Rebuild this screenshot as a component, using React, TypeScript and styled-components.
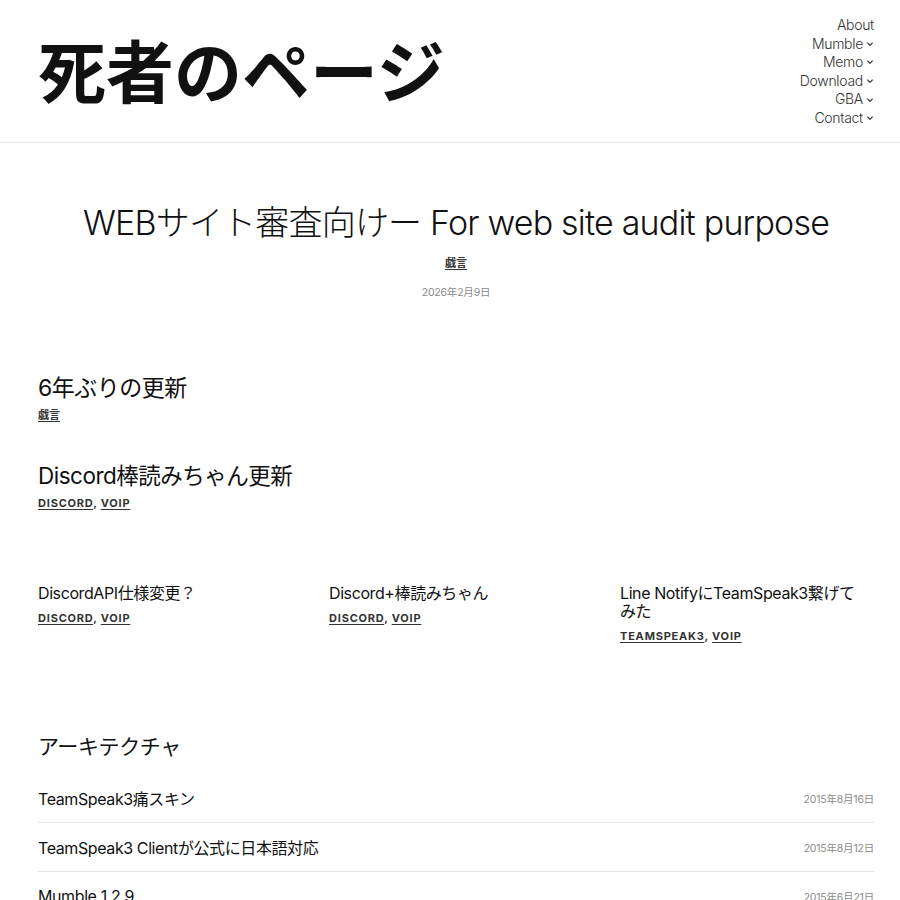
import React from "react";
import styled, { createGlobalStyle } from "styled-components";

const GlobalStyle = createGlobalStyle`
  html, body {
    margin: 0;
    padding: 0;
    background: #ffffff;
  }
  body {
    font-family: "Inter", "Noto Sans CJK JP", sans-serif;
    color: #111111;
  }
  a {
    color: inherit;
  }
`;

const Header = styled.header`
  display: flex;
  justify-content: space-between;
  align-items: flex-start;
  padding: 14px 26px 0 38px;
  height: 128px;
  border-bottom: 1px solid #e6e6e6;
`;

const SiteTitle = styled.h1`
  margin: 14px 0 0;
  font-family: "Noto Sans CJK JP", sans-serif;
  font-weight: 700;
  font-size: 68px;
  line-height: 1.2;
  letter-spacing: 0;
  color: #111111;
`;

const Nav = styled.nav`
  display: flex;
  flex-direction: column;
  align-items: flex-end;
  padding-top: 2px;
`;

const NavItem = styled.a`
  display: flex;
  align-items: center;
  gap: 3px;
  font-size: 14px;
  font-weight: 300;
  line-height: 18.6px;
  color: #333333;
  text-decoration: none;
  letter-spacing: -0.3px;
`;

const Chevron = () => (
  <svg width="8" height="8" viewBox="0 0 24 24" fill="none" stroke="currentColor" strokeWidth="3.2" strokeLinecap="round" strokeLinejoin="round">
    <path d="M5 9l7 7 7-7" />
  </svg>
);

const Main = styled.main`
  padding: 0 26px 0 38px;
`;

const Featured = styled.section`
  display: flex;
  flex-direction: column;
  align-items: center;
  padding-top: 56px;
`;

const FeaturedTitle = styled.h2`
  margin: 0;
  font-weight: 300;
  font-size: 34px;
  line-height: 48px;
  letter-spacing: -0.8px;
  color: #111111;
`;

const Terms = styled.div<{ $caps?: boolean }>`
  font-size: 11px;
  line-height: 16px;
  font-weight: 700;
  letter-spacing: ${(p) => (p.$caps ? "0.8px" : "0")};
  text-transform: ${(p) => (p.$caps ? "uppercase" : "none")};
  color: #333333;
  a {
    text-decoration: underline;
    text-underline-offset: 2px;
  }
`;

const CenterTerms = styled(Terms)`
  margin-top: 8px;
`;

const DateText = styled.time`
  font-size: 10.5px;
  color: #8a8a8a;
  letter-spacing: -0.2px;
`;

const FeaturedDate = styled(DateText)`
  margin-top: 13px;
`;

const Stack = styled.section`
  display: flex;
  flex-direction: column;
  gap: 38px;
  padding-top: 74px;
`;

const Post = styled.article`
  display: flex;
  flex-direction: column;
  gap: 4px;
`;

const PostTitle = styled.h3<{ $size: number }>`
  margin: 0;
  font-weight: 400;
  font-size: ${(p) => p.$size}px;
  line-height: 30px;
  letter-spacing: -0.5px;
  color: #111111;
`;

const Grid = styled.section`
  display: grid;
  grid-template-columns: repeat(3, 1fr);
  column-gap: 37px;
  padding-top: 73px;
`;

const GridPost = styled.article`
  display: flex;
  flex-direction: column;
  gap: 8px;
`;

const GridTitle = styled.h3`
  margin: 0;
  max-width: 240px;
  font-weight: 400;
  font-size: 16px;
  line-height: 18px;
  letter-spacing: -0.4px;
  color: #111111;
`;

const Archive = styled.section`
  padding-top: 87px;
`;

const ArchiveTitle = styled.h2`
  margin: 0 0 11px;
  font-weight: 400;
  font-size: 21px;
  line-height: 32px;
  letter-spacing: -0.4px;
`;

const Row = styled.div<{ $last?: boolean }>`
  display: flex;
  justify-content: space-between;
  align-items: center;
  height: 48px;
  border-bottom: ${(p) => (p.$last ? "none" : "1px solid #e4e4e4")};
`;

const RowTitle = styled.a`
  font-size: 16px;
  letter-spacing: -0.4px;
  text-decoration: none;
  color: #111111;
`;

const navItems = [
  { label: "About", sub: false },
  { label: "Mumble", sub: true },
  { label: "Memo", sub: true },
  { label: "Download", sub: true },
  { label: "GBA", sub: true },
  { label: "Contact", sub: true },
];

const gridPosts = [
  { title: "DiscordAPI仕様変更？", tags: ["discord", "voip"] },
  { title: "Discord+棒読みちゃん", tags: ["discord", "voip"] },
  { title: "Line NotifyにTeamSpeak3繋げてみた", tags: ["teamspeak3", "voip"] },
];

const archive = [
  { title: "TeamSpeak3痛スキン", date: "2015年8月16日" },
  { title: "TeamSpeak3 Clientが公式に日本語対応", date: "2015年8月12日" },
  { title: "Mumble 1.2.9", date: "2015年6月21日" },
];

function TagList({ tags, caps }: { tags: string[]; caps?: boolean }) {
  return (
    <Terms $caps={caps}>
      {tags.map((t, i) => (
        <React.Fragment key={t}>
          {i > 0 && ", "}
          <a href="#">{t}</a>
        </React.Fragment>
      ))}
    </Terms>
  );
}

export default function App() {
  return (
    <>
      <GlobalStyle />
      <Header>
        <SiteTitle>死者のページ</SiteTitle>
        <Nav>
          {navItems.map((n) => (
            <NavItem href="#" key={n.label}>
              {n.label}
              {n.sub && <Chevron />}
            </NavItem>
          ))}
        </Nav>
      </Header>
      <Main>
        <Featured>
          <FeaturedTitle>WEBサイト審査向けー For web site audit purpose</FeaturedTitle>
          <CenterTerms>
            <a href="#">戯言</a>
          </CenterTerms>
          <FeaturedDate>2026年2月9日</FeaturedDate>
        </Featured>

        <Stack>
          <Post>
            <PostTitle $size={23}>6年ぶりの更新</PostTitle>
            <TagList tags={["戯言"]} />
          </Post>
          <Post>
            <PostTitle $size={22.5}>Discord棒読みちゃん更新</PostTitle>
            <TagList tags={["discord", "voip"]} caps />
          </Post>
        </Stack>

        <Grid>
          {gridPosts.map((p) => (
            <GridPost key={p.title}>
              <GridTitle>{p.title}</GridTitle>
              <TagList tags={p.tags} caps />
            </GridPost>
          ))}
        </Grid>

        <Archive>
          <ArchiveTitle>アーキテクチャ</ArchiveTitle>
          {archive.map((a, i) => (
            <Row key={a.title} $last={i === archive.length - 1}>
              <RowTitle href="#">{a.title}</RowTitle>
              <DateText>{a.date}</DateText>
            </Row>
          ))}
        </Archive>
      </Main>
    </>
  );
}
